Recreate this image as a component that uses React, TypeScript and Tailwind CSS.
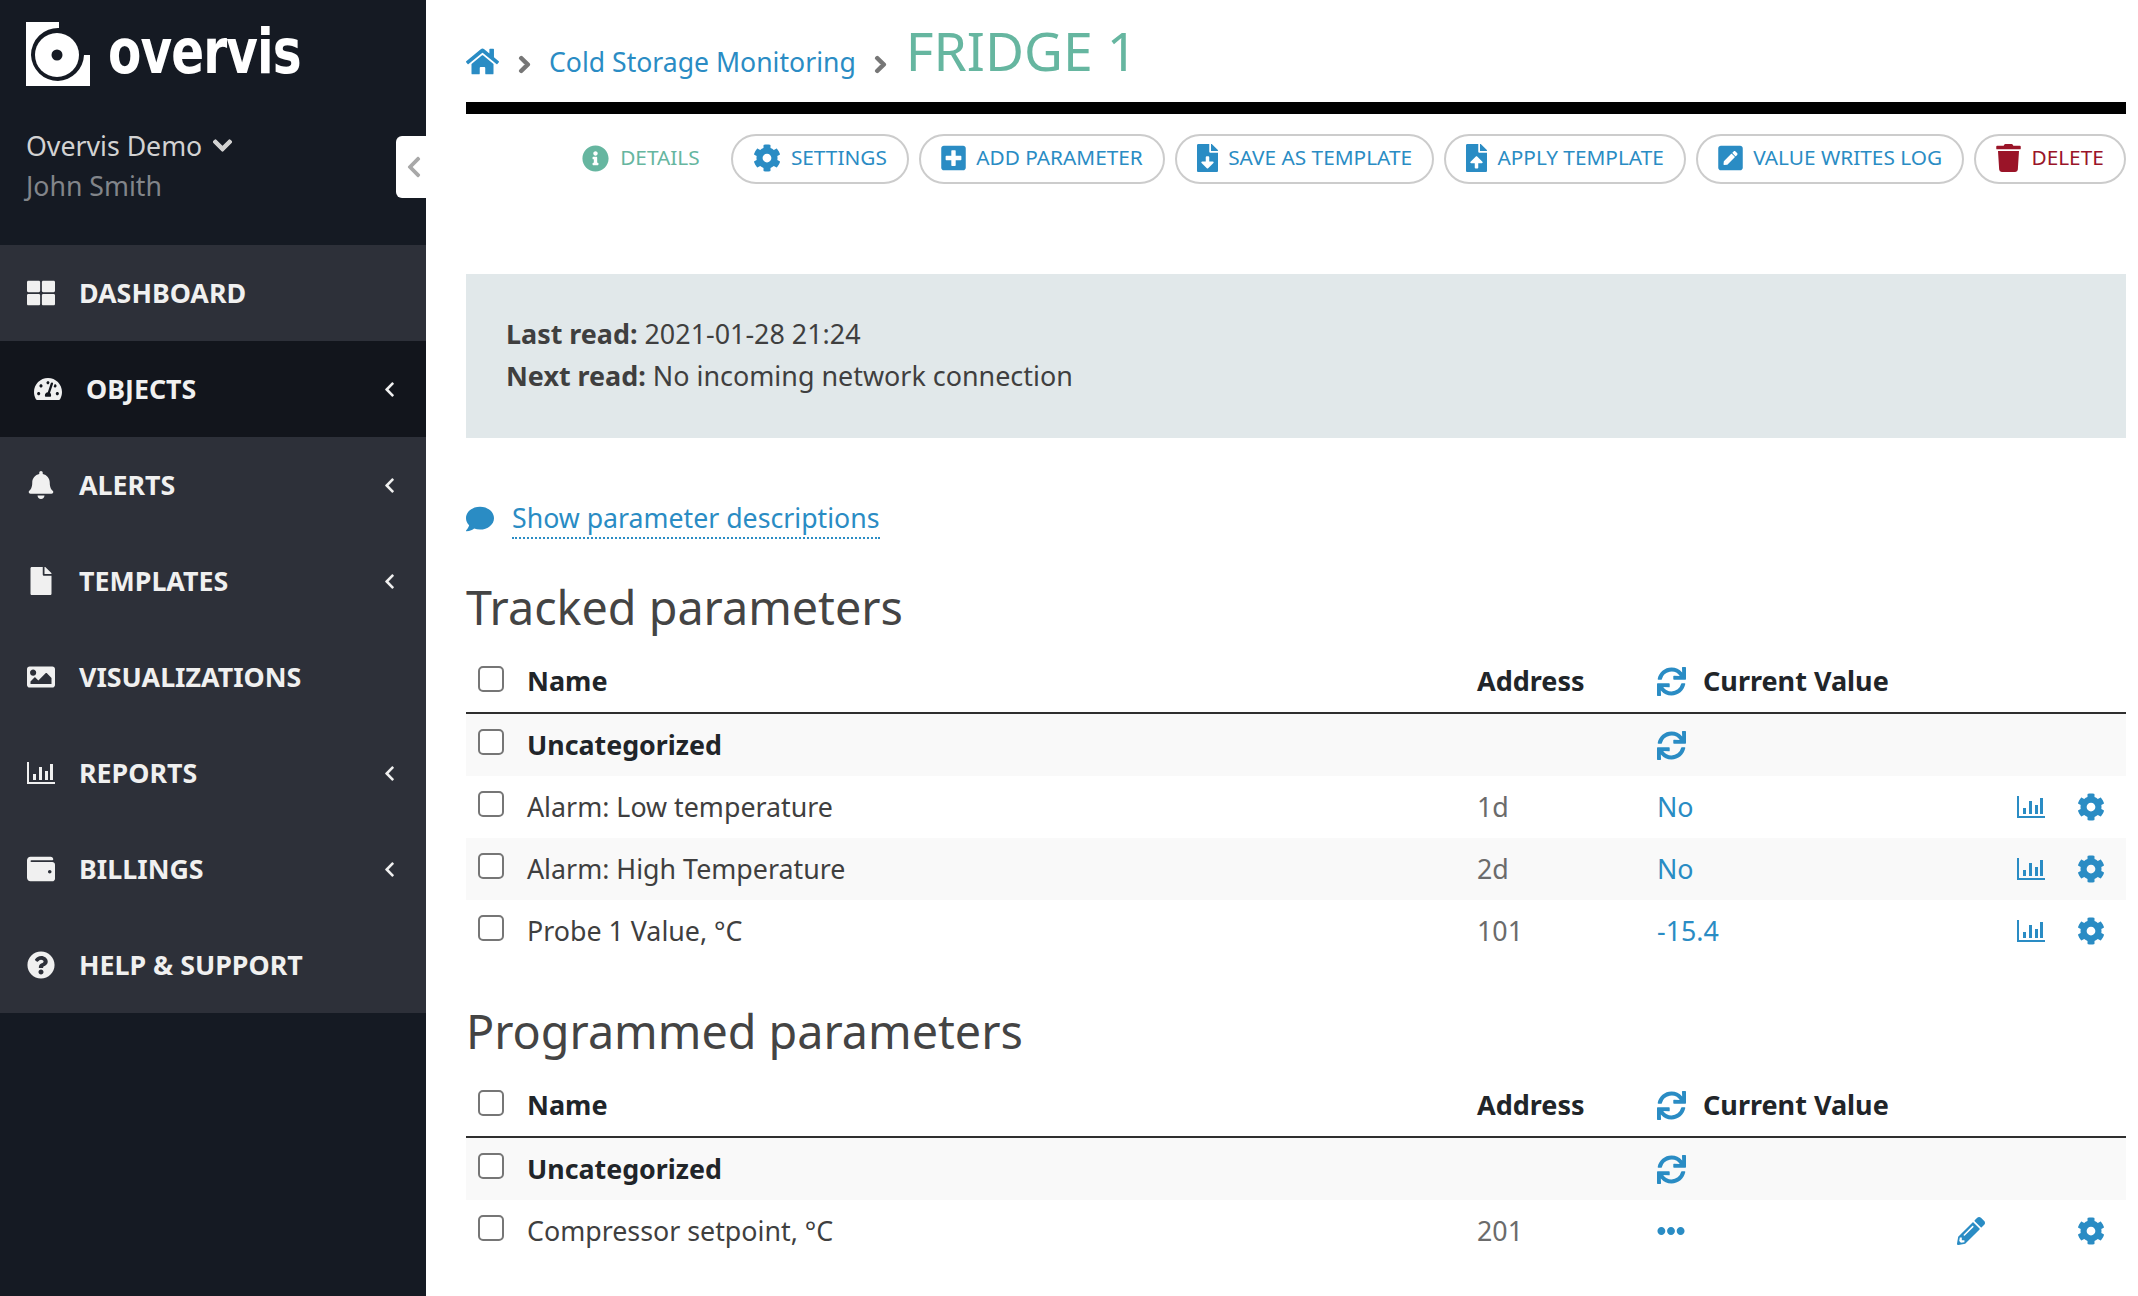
import type { ReactNode } from "react";
import {
  FaBell,
  FaChevronDown,
  FaChevronLeft,
  FaChevronRight,
  FaCog,
  FaComment,
  FaEllipsisH,
  FaFile,
  FaFileDownload,
  FaFileUpload,
  FaHome,
  FaImage,
  FaInfoCircle,
  FaPenSquare,
  FaPencilAlt,
  FaPlusSquare,
  FaQuestionCircle,
  FaSync,
  FaTachometerAlt,
  FaThLarge,
  FaTrash,
  FaWallet,
} from "react-icons/fa";

const Logo = () => (
  <svg viewBox="0 0 64 64" className="h-[64px] w-[64px]">
    <path d="M0 0H33V6H5V59H58V33H64V64H0Z" fill="#fff" />
    <path d="M5 6H33A27 27 0 0 0 5 33ZM5 33A27 27 0 0 0 32 59H5ZM32 59A27 27 0 0 0 58 33V59Z" fill="#fff" />
    <circle cx="31" cy="33" r="22" fill="#fff" />
    <circle cx="31" cy="33" r="5.5" fill="#151a23" />
  </svg>
);

const BarsIcon = ({ className }: { className: string }) => (
  <svg viewBox="0 0 28 22" className={className} fill="currentColor">
    <rect x="0" y="0" width="2" height="22" />
    <rect x="0" y="20" width="28" height="2" />
    <rect x="6" y="12" width="3" height="6" />
    <rect x="12" y="5" width="3" height="13" />
    <rect x="18" y="9" width="3" height="9" />
    <rect x="23" y="2" width="3" height="16" />
  </svg>
);

const NavItem = ({
  icon,
  label,
  arrow,
  active,
}: {
  icon: ReactNode;
  label: string;
  arrow?: boolean;
  active?: boolean;
}) => (
  <div
    className={`flex h-24 items-center pr-[28px] text-[#f0f0f0] ${
      active ? "bg-[#12151c] pl-[33px]" : "pl-[26px]"
    }`}
  >
    <span className="flex w-[30px] justify-center text-[28px]">{icon}</span>
    <span className="ml-[23px] text-[26.8px] font-bold">{label}</span>
    {arrow && <FaChevronLeft className="ml-auto text-[17px]" />}
  </div>
);

const ToolButton = ({
  icon,
  label,
  red,
}: {
  icon: ReactNode;
  label: string;
  red?: boolean;
}) => (
  <button
    className={`flex h-[50px] items-center gap-[10px] rounded-[25px] border-2 border-[#cccccc] bg-white px-[20.2px] pb-[2px] text-[20.8px] ${
      red ? "text-[#9a1428]" : "text-[#2a8cc4]"
    }`}
  >
    <span className="text-[28px]">{icon}</span>
    {label}
  </button>
);

const Check = () => (
  <input
    type="checkbox"
    className="-mt-[6px] h-[26px] w-[26px] appearance-none rounded-[5px] border-2 border-[#767676] bg-white"
  />
);

const Row = ({
  name,
  address,
  value,
  bold,
  shaded,
  kind,
}: {
  name: string;
  address?: string;
  value?: ReactNode;
  bold?: boolean;
  shaded?: boolean;
  kind?: "chart" | "edit";
}) => (
  <div className={`flex h-[62px] items-center text-[26.8px] ${shaded ? "bg-[#f9f9f9]" : ""}`}>
    <div className="flex w-[61px] pl-[12px]">
      <Check />
    </div>
    <div className={`w-[950px] ${bold ? "font-bold text-[#212529]" : "text-[#3f3f3f]"}`}>{name}</div>
    <div className="w-[180px] text-[#6b6b6b]">{address}</div>
    <div className="flex-1 text-[#2a8cc4]">{value}</div>
    {kind && (
      <div className="flex items-center gap-8 pr-[21px] text-[#2a8cc4]">
        <span className="flex w-[28px] justify-center">
          {kind === "edit" && <FaPencilAlt className="text-[28px]" />}
        </span>
        <span className="flex w-[28px] justify-center">
          {kind === "chart" && <BarsIcon className="h-[22px] w-[28px]" />}
        </span>
        <span className="flex w-[28px] justify-center">
          <FaCog className="text-[28px]" />
        </span>
      </div>
    )}
  </div>
);

const TableHead = () => (
  <div className="flex h-[63px] items-center border-b-2 border-[#2f2f2f] text-[27px] font-bold text-[#212529]">
    <div className="flex w-[61px] pl-[12px]">
      <Check />
    </div>
    <div className="w-[950px]">Name</div>
    <div className="w-[180px]">Address</div>
    <div className="flex items-center gap-[17px]">
      <FaSync className="text-[29px] text-[#2a8cc4]" />
      Current Value
    </div>
  </div>
);

export default function App() {
  return (
    <div className="flex h-screen overflow-hidden bg-white font-['Noto_Sans',sans-serif]">
      {/* sidebar */}
      <aside className="relative w-[426px] shrink-0 bg-[#151a23]">
        <div className="h-[245px] pl-[26px] pt-[22px]">
          <div className="flex items-center gap-[18px]">
            <Logo />
            <span className="-mt-[5px] origin-left scale-x-[0.87] font-['DejaVu_Sans',sans-serif] text-[62px] leading-[64px] font-bold font-stretch-condensed tracking-[-1px] text-white">
              overvis
            </span>
          </div>
          <div className="mt-[39px] flex items-center gap-[10px] text-[26.7px] leading-[41px] text-[#d2d2d2]">
            Overvis Demo
            <FaChevronDown className="stroke-[30] text-[21px]" />
          </div>
          <div className="-mt-[1px] text-[26.7px] leading-[41px] text-[#82858a]">John Smith</div>
        </div>
        <nav className="bg-[#2d3039]">
          <NavItem icon={<FaThLarge />} label="DASHBOARD" />
          <NavItem icon={<FaTachometerAlt />} label="OBJECTS" arrow active />
          <NavItem icon={<FaBell />} label="ALERTS" arrow />
          <NavItem icon={<FaFile />} label="TEMPLATES" arrow />
          <NavItem icon={<FaImage />} label="VISUALIZATIONS" />
          <NavItem icon={<BarsIcon className="h-[22px] w-[28px]" />} label="REPORTS" arrow />
          <NavItem icon={<FaWallet />} label="BILLINGS" arrow />
          <NavItem icon={<FaQuestionCircle />} label="HELP & SUPPORT" />
        </nav>
        <div className="absolute right-0 top-[136px] flex h-[62px] w-[30px] items-center justify-end rounded-l-[6px] bg-white text-[#a8a8a8]">
          <FaChevronLeft className="text-[24px]" />
        </div>
      </aside>

      {/* main */}
      <main className="min-w-0 flex-1 pl-[40px] pr-3">
        <div className="flex h-[102px] items-center">
          <FaHome className="mt-[20px] text-[33px] text-[#2a8cc4]" />
          <FaChevronRight className="ml-[16px] mt-[26px] stroke-[40] text-[19px] text-[#777]" />
          <span className="ml-[15px] mt-[23px] text-[26.6px] text-[#2a8cc4]">Cold Storage Monitoring</span>
          <FaChevronRight className="ml-[15px] mt-[26px] stroke-[40] text-[19px] text-[#777]" />
          <h1 className="ml-[16px] mt-[1px] text-[53.5px] text-[#66b6a0]">FRIDGE 1</h1>
        </div>
        <div className="h-3 bg-black" />

        <div className="mt-5 flex justify-end gap-[10px]">
          <div className="mr-[21px] flex items-center gap-[11px] pb-[2px] text-[20.8px] text-[#66b6a0]">
            <FaInfoCircle className="text-[27px]" />
            DETAILS
          </div>
          <ToolButton icon={<FaCog className="w-[28px]" />} label="SETTINGS" />
          <ToolButton icon={<FaPlusSquare className="w-[25px]" />} label="ADD PARAMETER" />
          <ToolButton icon={<FaFileDownload className="w-[21px]" />} label="SAVE AS TEMPLATE" />
          <ToolButton icon={<FaFileUpload className="w-[21px]" />} label="APPLY TEMPLATE" />
          <ToolButton icon={<FaPenSquare className="w-[25px]" />} label="VALUE WRITES LOG" />
          <ToolButton icon={<FaTrash className="w-[25px]" />} label="DELETE" red />
        </div>

        <div className="mt-[90px] h-[164px] bg-[#e1e8ea] px-10 py-[39px] text-[26.9px] leading-[42px] text-[#3f3f3f]">
          <div>
            <b>Last read:</b> 2021-01-28 21:24
          </div>
          <div>
            <b>Next read:</b> No incoming network connection
          </div>
        </div>

        <div className="mt-[61px] flex items-center gap-[18px] text-[26.7px] text-[#2a8cc4]">
          <FaComment className="text-[28px]" />
          <span className="border-b-2 border-dotted border-[#2a8cc4] leading-[38px]">
            Show parameter descriptions
          </span>
        </div>

        <h2 className="mt-[35px] text-[46.7px] leading-[66px] text-[#444]">Tracked parameters</h2>
        <div className="mt-[11px]">
          <TableHead />
          <Row name="Uncategorized" bold shaded value={<FaSync className="text-[29px]" />} />
          <Row name="Alarm: Low temperature" address="1d" value="No" kind="chart" />
          <Row name="Alarm: High Temperature" address="2d" value="No" kind="chart" shaded />
          <Row name="Probe 1 Value, °C" address="101" value="-15.4" kind="chart" />
        </div>

        <h2 className="mt-[36px] text-[46.7px] leading-[66px] text-[#444]">Programmed parameters</h2>
        <div className="mt-[11px]">
          <TableHead />
          <Row name="Uncategorized" bold shaded value={<FaSync className="text-[29px]" />} />
          <Row name="Compressor setpoint, °C" address="201" value={<FaEllipsisH className="text-[28px]" />} kind="edit" />
        </div>
      </main>
    </div>
  );
}
